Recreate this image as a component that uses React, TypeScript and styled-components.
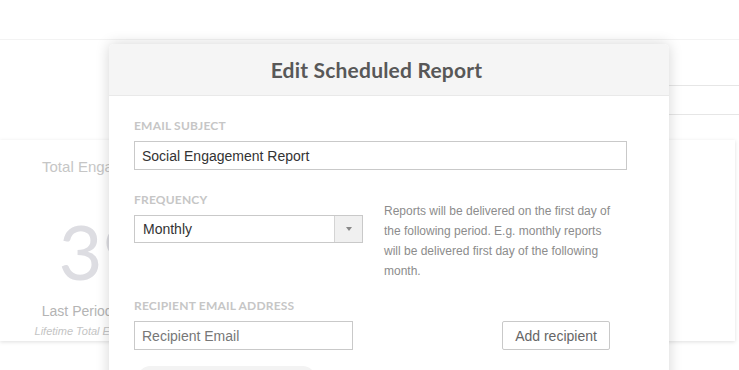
import React from 'react';
import styled, { createGlobalStyle } from 'styled-components';

const GlobalStyle = createGlobalStyle`
  html, body {
    margin: 0;
    padding: 0;
    background: #ffffff;
    font-family: "Liberation Sans", Arial, sans-serif;
    overflow: hidden;
  }
`;

const Page = styled.div`
  position: relative;
  width: 739px;
  height: 370px;
  overflow: hidden;
  background: #fff;
`;

const TopBar = styled.header`
  height: 39px;
  border-bottom: 1px solid #f3f3f3;
`;

const FilterArea = styled.div`
  height: 100px;
  display: flex;
  justify-content: flex-end;
  align-items: flex-start;
`;

const FilterBox = styled.div`
  margin-top: 45px;
  width: 340px;
  height: 28px;
  border-top: 1px solid #e6e6e6;
  border-bottom: 1px solid #e6e6e6;
`;

const CardGrid = styled.div`
  display: grid;
  grid-template-columns: 205px 1fr 205px;
  gap: 20px;
  padding-right: 4px;
`;

const StatCard = styled.div`
  height: 201px;
  background: #fff;
  box-shadow: 0 1px 4px rgba(0, 0, 0, 0.13);
  display: flex;
  flex-direction: column;
  align-items: center;
  padding-top: 18px;
  box-sizing: border-box;
`;

const StatTitle = styled.div`
  font-size: 15px;
  line-height: 18px;
  color: #c6c6c6;
`;

const StatNumber = styled.div`
  font-family: Lato, "Open Sans", sans-serif;
  font-weight: 400;
  font-size: 76px;
  line-height: 80px;
  margin-top: 35px;
  color: #dddde2;
`;

const StatSub = styled.div`
  font-size: 14px;
  line-height: 17px;
  margin-top: 12px;
  color: #b4b4b4;
`;

const StatNote = styled.div`
  font-size: 11px;
  font-style: italic;
  line-height: 14px;
  margin-top: 4px;
  color: #c4c4c4;
`;

const Modal = styled.div`
  position: absolute;
  left: 109px;
  top: 44px;
  width: 560px;
  height: 360px;
  background: #fff;
  border-radius: 5px;
  box-shadow: 0 0 14px rgba(0, 0, 0, 0.17);
  overflow: hidden;
`;

const ModalHeader = styled.div`
  height: 51px;
  background: #f5f5f5;
  border-bottom: 1px solid #e9e9e9;
  display: flex;
  align-items: center;
  justify-content: center;
  padding-right: 25px;
`;

const ModalTitle = styled.h2`
  margin: 0;
  font-family: Lato, "Open Sans", sans-serif;
  font-weight: 700;
  font-size: 21px;
  color: #585858;
  letter-spacing: 0.2px;
`;

const ModalBody = styled.div`
  padding: 23px 25px 0;
`;

const Field = styled.div<{ $gap?: number }>`
  margin-top: ${(p) => p.$gap ?? 0}px;
`;

const Label = styled.div`
  font-family: Lato, "Open Sans", sans-serif;
  font-weight: 700;
  font-size: 12px;
  letter-spacing: 0.2px;
  line-height: 14px;
  color: #c6c6c6;
  text-transform: uppercase;
  margin-bottom: 8px;
`;

const TextInput = styled.div<{ $width: number; $muted?: boolean }>`
  width: ${(p) => p.$width}px;
  height: 29px;
  box-sizing: border-box;
  border: 1px solid #c9c9c9;
  padding: 0 7px;
  display: flex;
  align-items: center;
  font-size: 14px;
  color: ${(p) => (p.$muted ? '#777' : '#333')};
`;

const FrequencyRow = styled.div`
  display: flex;
  gap: 21px;
  margin-top: 23px;
`;

const Select = styled.div`
  width: 229px;
  height: 28px;
  box-sizing: border-box;
  border: 1px solid #c9c9c9;
  display: flex;
`;

const SelectValue = styled.div`
  flex: 1;
  padding-left: 8px;
  display: flex;
  align-items: center;
  font-size: 14px;
  color: #333;
`;

const SelectArrow = styled.div`
  width: 27px;
  background: #f0f0f0;
  border-left: 1px solid #d4d4d4;
  display: flex;
  align-items: center;
  justify-content: center;

  &::after {
    content: '';
    border-left: 3px solid transparent;
    border-right: 3px solid transparent;
    border-top: 4px solid #888;
  }
`;

const HelpText = styled.p`
  margin: 8px 0 0;
  width: 235px;
  font-size: 12px;
  line-height: 20px;
  color: #8c8c8c;
`;

const RecipientRow = styled.div`
  display: flex;
  gap: 149px;
`;

const AddButton = styled.button`
  width: 108px;
  height: 29px;
  box-sizing: border-box;
  border: 1px solid #c9c9c9;
  border-radius: 2px;
  background: #fff;
  font-family: "Liberation Sans", Arial, sans-serif;
  font-size: 14px;
  color: #666;
  padding: 0;
`;

const RecipientTag = styled.div`
  margin: 16px 0 0 4px;
  width: 177px;
  height: 24px;
  border-radius: 12px;
  background: #f3f3f3;
`;

export default function App() {
  return (
    <Page>
      <GlobalStyle />
      <TopBar />
      <FilterArea>
        <FilterBox />
      </FilterArea>
      <CardGrid>
        <StatCard>
          <StatTitle>Total Engagement</StatTitle>
          <StatNumber>39</StatNumber>
          <StatSub>Last Period: 36,412</StatSub>
          <StatNote>Lifetime Total Engagements</StatNote>
        </StatCard>
        <StatCard />
        <StatCard />
      </CardGrid>

      <Modal>
        <ModalHeader>
          <ModalTitle>Edit Scheduled Report</ModalTitle>
        </ModalHeader>
        <ModalBody>
          <Field>
            <Label>Email Subject</Label>
            <TextInput $width={493}>Social Engagement Report</TextInput>
          </Field>
          <FrequencyRow>
            <div>
              <Label>Frequency</Label>
              <Select>
                <SelectValue>Monthly</SelectValue>
                <SelectArrow />
              </Select>
            </div>
            <HelpText>
              Reports will be delivered on the first day of the following period. E.g. monthly
              reports will be delivered first day of the following month.
            </HelpText>
          </FrequencyRow>
          <Field $gap={18}>
            <Label>Recipient Email Address</Label>
            <RecipientRow>
              <TextInput $width={219} $muted>Recipient Email</TextInput>
              <AddButton>Add recipient</AddButton>
            </RecipientRow>
          </Field>
          <RecipientTag />
        </ModalBody>
      </Modal>
    </Page>
  );
}
